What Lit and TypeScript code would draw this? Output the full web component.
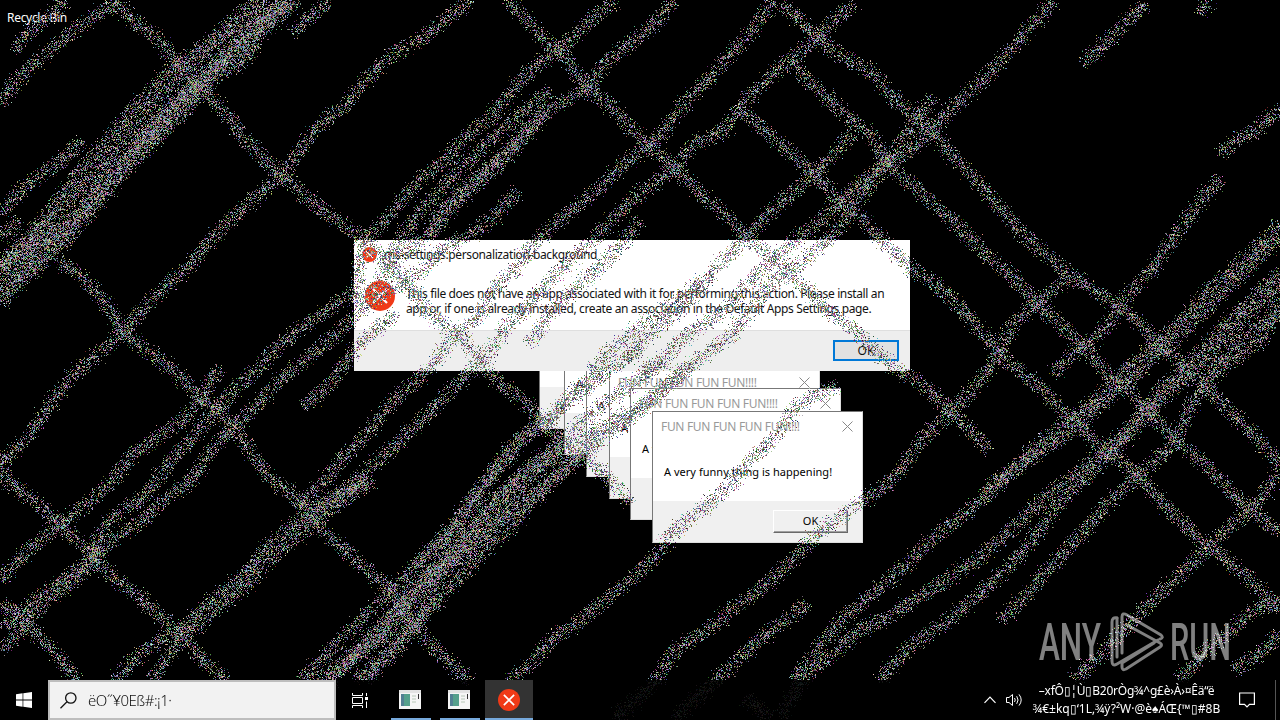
import {LitElement, html, css, svg} from 'lit';
import {customElement, property} from 'lit/decorators.js';
import {map} from 'lit/directives/map.js';

// every scratch is a flat list of x,y pairs
const SCRATCHES : number[][] = [
  // top left
  [66,0, 45,18, 28,32, 14,50],
  [118,0, 80,25, 43,55, 20,76, 0,102],
  [115,0, 133,20, 160,40, 177,63, 197,85, 217,103, 240,132, 267,163, 282,175, 310,200, 333,217, 360,237, 390,265, 407,285, 430,315, 457,332, 480,362, 493,378, 520,398, 537,415, 563,440, 600,470, 630,502],
  [256,0, 225,28, 194,52, 168,72, 135,105, 108,138, 80,170, 55,203, 25,240, 0,262],
  [268,0, 235,28, 205,52, 178,78, 145,110, 118,142, 90,175, 64,205, 32,240, 0,272],
  [280,5, 240,38, 200,80, 165,110, 140,138, 105,170, 85,203, 55,235, 30,258, 0,280],
  [290,0, 255,32, 240,50, 205,80, 180,105, 148,140, 115,172, 90,203, 60,235, 35,262, 0,290],
  [298,0, 262,30, 243,62, 215,75, 190,104, 155,140, 125,168, 100,200, 70,235, 50,255, 20,282, 0,302],
  [285,0, 248,30, 222,58, 190,88, 160,118, 130,150],
  [60,225, 35,245, 15,255, 0,268],
  [328,0, 310,16, 292,32],
  [82,140, 65,157, 35,178, 15,195, 0,212],
  [20,220, 0,238],
  [472,0, 447,17, 427,35, 393,53, 367,77, 347,103, 320,123, 300,150, 282,173, 260,193, 233,217, 210,240, 187,267, 160,290, 140,312, 123,332, 100,352, 73,373, 50,403, 27,437, 0,463],
  [57,260, 77,273, 97,293, 113,313, 123,332, 147,350, 173,370, 197,393, 217,410, 233,427, 250,450, 270,480, 293,493, 300,507, 313,520, 333,540, 360,563, 388,588, 427,640, 450,663, 470,680],
  // top middle
  [507,0, 527,20, 543,40, 560,50, 573,70, 587,87, 607,103, 627,123, 647,143, 673,167, 700,193, 727,217, 747,238, 773,258, 790,275, 813,295, 830,312, 857,332, 877,352, 896,368, 920,383, 940,400, 956,417, 973,433, 988,450],
  [614,0, 587,23, 560,48, 537,63, 517,83, 497,110, 470,133, 447,157, 427,173, 403,197, 383,223, 363,240, 356,290, 327,310, 300,327, 273,350, 260,367, 240,383, 213,413, 190,440, 170,460, 143,497, 117,513, 97,535, 93,557, 67,577, 43,593, 20,613, 0,627],
  [674,0, 654,23, 634,40, 607,60, 587,87, 564,100, 540,113, 524,137, 500,163, 477,183, 454,203, 434,230, 412,246, 390,265, 372,290, 353,302],
  [550,90, 527,107, 504,127, 480,150, 447,180, 427,203, 405,230, 390,258],
  [547,112, 520,135, 495,160, 470,182, 442,208, 428,236],
  [517,190, 500,210, 477,230, 443,248, 420,272, 385,290, 353,317, 333,337, 307,357, 283,377, 260,400, 233,427, 213,447, 190,480, 163,500, 133,527, 110,540, 93,560, 70,583, 45,600, 25,625, 0,650],
  [397,313, 373,330, 353,350, 333,380, 303,407],
  [220,367, 203,393, 183,420, 157,437, 133,453, 110,483, 90,500, 60,523, 30,547, 0,580],
  [774,0, 754,27, 727,57, 707,80, 684,103, 664,130, 647,147, 624,163, 604,183, 584,200, 560,220, 532,243, 517,268, 493,288, 480,315, 457,332, 425,372, 390,403, 367,433, 340,460, 320,483, 300,505],
  [854,3, 837,17, 817,37, 790,57, 780,67, 754,90, 737,110, 724,130, 694,143, 674,167, 644,190, 617,213, 594,238, 557,272, 537,295, 510,322, 483,358, 455,385, 427,413, 397,443, 370,467, 345,490, 310,512],
  [640,220, 620,245, 593,272, 570,292, 547,315, 530,345],
  [780,3, 797,17, 817,37, 837,53, 854,62, 873,73, 896,100, 916,117, 933,133, 953,157, 976,180, 996,203, 1026,237, 1050,258, 1070,273, 1093,290, 1120,307, 1143,327, 1163,347, 1186,367, 1206,387, 1236,417, 1266,447, 1280,465],
  [790,60, 810,83, 834,103, 853,122, 870,133, 880,150, 890,167, 910,183, 933,203, 970,238, 993,260, 1013,277, 1036,303, 1060,323, 1083,347, 1106,373, 1126,387, 1150,413, 1173,437, 1196,457, 1220,480, 1250,510, 1280,532],
  [740,110, 764,130, 787,150, 814,173, 834,197, 853,210, 880,238, 910,267, 940,287, 963,310, 996,350, 1010,363, 1040,387, 1070,417, 1093,440, 1116,457, 1140,477, 1165,505, 1200,540, 1240,570, 1280,610],
  [1053,0, 1030,27, 1010,50, 986,77, 956,103, 933,127, 910,150, 886,163, 853,187, 824,217, 797,238, 773,258, 743,288, 727,308, 690,332, 663,358, 640,375],
  [853,133, 814,173, 780,203, 747,235, 720,262, 700,288, 673,315, 647,335, 625,360],
  [933,97, 913,123, 893,150, 873,180, 853,207, 830,238, 797,265, 767,285, 753,308, 727,338, 690,365, 660,390, 620,425],
  [700,280, 670,305, 640,325, 610,350, 590,372],
  // top right
  [1146,3, 1120,27, 1100,47, 1083,63],
  [1207,0, 1200,13],
  [1280,107, 1256,130, 1236,140, 1220,155],
  [1220,177, 1206,193, 1186,220, 1168,243, 1153,267, 1130,290, 1116,313, 1096,337, 1073,353, 1053,373],
  [1280,223, 1258,245, 1236,267, 1206,292, 1186,315, 1160,340, 1130,365, 1106,388, 1076,415, 1043,440, 1013,468, 985,492],
  [1280,236, 1240,275, 1210,303, 1188,328, 1160,350, 1135,375, 1108,397, 1076,427, 1043,450, 1005,476, 975,505, 935,535, 905,565, 870,595, 840,620, 814,653, 794,680],
  [1280,270, 1253,298, 1223,325, 1193,360, 1160,388, 1143,412, 1113,443, 1080,470, 1040,500, 1010,530, 975,560, 930,590, 890,615, 854,633, 830,657, 800,680],
  [1280,284, 1253,310, 1223,338, 1193,372, 1160,398, 1140,423, 1113,450, 1085,478, 1055,505, 1025,550, 973,600, 940,625, 905,650, 880,680],
  [1280,300, 1260,340, 1220,367, 1206,383, 1190,407, 1176,437, 1163,453, 1140,473, 1110,500, 1085,530, 1055,560, 1023,598, 1000,620],
  [1280,312, 1258,325, 1235,345, 1208,372],
  [1070,277, 1036,303, 1013,323, 1000,350, 980,380, 956,407, 930,430, 910,453, 896,477, 875,492, 853,507, 820,530, 794,557, 767,583, 734,607, 707,630, 674,650, 657,680, 615,718],
  // middle band running down to the task bar
  [640,345, 610,370, 580,385, 545,425, 510,445, 480,490, 455,530, 427,555, 395,585, 360,620, 325,655, 300,680],
  [665,360, 630,385, 600,405, 560,440, 520,475, 490,505, 460,545, 430,575, 400,605, 365,640, 330,680],
  [690,365, 650,400, 605,435, 570,465, 545,485, 505,515, 475,540, 440,570, 415,600, 390,630, 350,660, 315,680],
  [625,410, 585,445, 555,475, 520,515, 490,545, 465,570, 435,602, 410,625, 385,655, 355,680],
  [600,375, 575,395, 550,415, 525,432, 505,460, 485,482, 460,515, 440,540, 415,565],
  [560,445, 530,478, 495,520, 470,550, 440,570, 425,610, 400,645, 365,680],
  [600,425, 565,450, 535,465, 500,495, 470,530, 445,555, 410,590, 375,640, 340,665],
  // bottom left
  [0,463, 7,480, 33,500, 60,523, 77,540, 97,557, 110,577, 133,590, 153,610, 180,633, 200,657, 227,680],
  [0,603, 17,613, 27,627, 50,647, 77,680],
  [180,630, 147,647, 113,680],
  [180,640, 150,680],
  [365,480, 328,500, 305,517, 285,530, 263,550, 240,578, 210,600, 180,630],
  [373,480, 338,503, 315,520, 295,537, 270,558, 248,583, 218,607, 186,634],
  // bottom middle and right
  [837,385, 813,395, 793,408, 780,432, 750,458, 727,488, 704,507, 674,530, 657,553, 630,580, 607,597, 580,620, 550,640, 527,667, 507,680],
  [807,603, 780,623, 754,643, 730,667, 674,718],
  [745,697, 770,717],
  [800,680, 780,715],
  [1280,470, 1255,505, 1225,530, 1195,560, 1153,600, 1130,623, 1107,647, 1073,680],
  [1280,600, 1253,610, 1230,630, 1203,653, 1178,680],
  [1280,633, 1260,653, 1233,670]
];

@customElement('noise-scratches')
class NoiseScratches extends LitElement {
  private seed = 20771;

  // mulberry32, so the pattern is the same on every load
  private random() {
    this.seed = (this.seed + 0x6d2b79f5) | 0;
    let t = Math.imul(this.seed ^ (this.seed >>> 15), 1 | this.seed);
    t = (t + Math.imul(t ^ (t >>> 7), 61 | t)) ^ t;
    return ((t ^ (t >>> 14)) >>> 0) / 4294967296;
  }

  firstUpdated() {
    const canvas = this.renderRoot.querySelector('canvas');
    const ctx = canvas.getContext('2d');
    SCRATCHES.forEach(line => this.drawScratch(ctx, line));
  }

  private drawScratch(ctx : CanvasRenderingContext2D, line : number[]) {
    for (let i = 0; i + 3 < line.length; i += 2) {
      const dx = line[i + 2] - line[i];
      const dy = line[i + 3] - line[i + 1];
      const length = Math.hypot(dx, dy);
      const dots = length * 6;
      for (let n = 0; n < dots; n++) {
        const t = this.random();
        const off = (this.random() + this.random() - 1) * 9;
        const x = line[i] + dx * t - dy / length * off + (this.random() - 0.5) * 5;
        const y = line[i + 1] + dy * t + dx / length * off + (this.random() - 0.5) * 5;
        const base = this.random() * 120;
        const r = Math.floor(base + this.random() * 135);
        const g = Math.floor(base + this.random() * 135);
        const b = Math.floor(base + this.random() * 135);
        ctx.fillStyle = `rgb(${r},${g},${b})`;
        ctx.fillRect(Math.round(x), Math.round(y), 1, 1);
      }
    }
  }

  render() {
    return html`<canvas width="1280" height="720"></canvas>`;
  }

  static styles = css`
    :host, canvas {
      display: block;
    }
  `;
}

const errorIcon = (size : number) => svg`
  <svg width=${size} height=${size} viewBox="0 0 30 30">
    <circle cx="15" cy="15" r="15" fill="#f03a17"/>
    <path d="M8 8 L22 22 M22 8 L8 22" stroke="#fff" stroke-width="2.3"/>
  </svg>`;

@customElement('fun-window')
class FunWindow extends LitElement {
  render() {
    return html`
      <div class="title">
        <span>FUN FUN FUN FUN FUN!!!!</span>
        <svg width="11" height="11" viewBox="0 0 11 11">
          <path d="M.5 .5 L10.5 10.5 M10.5 .5 L.5 10.5" stroke="#888" fill="none"/>
        </svg>
      </div>
      <div class="message">A very funny thing is happening!</div>
      <div class="footer"><div class="button">OK</div></div>
    `;
  }

  static styles = css`
    :host {
      display: flex;
      flex-direction: column;
      box-sizing: border-box;
      width: 211px;
      height: 132px;
      border: 1px solid #777;
      border-right-color: #ddd;
      border-bottom-color: #ddd;
      background: #fff;
      font-family: "Noto Sans", sans-serif;
    }

    .title {
      display: flex;
      align-items: center;
      justify-content: space-between;
      height: 29px;
      padding: 0 9px 0 8px;
      color: #999;
      font-size: 12px;
      letter-spacing: -0.32px;
    }

    .message {
      flex: 1;
      padding: 23px 0 0 11px;
      color: #000;
      font-size: 11px;
      line-height: 16px;
      letter-spacing: 0.03px;
      white-space: nowrap;
    }

    .footer {
      display: flex;
      justify-content: flex-end;
      box-sizing: border-box;
      height: 41px;
      padding: 9px 14px 0 0;
      background: #f0f0f0;
    }

    .button {
      box-sizing: border-box;
      width: 75px;
      height: 23px;
      border: 1px solid;
      border-color: #fff #696969 #696969 #fff;
      box-shadow: inset -1px -1px #a0a0a0;
      color: #000;
      font-size: 11px;
      line-height: 20px;
      text-align: center;
    }
  `;
}

@customElement('error-dialog')
class ErrorDialog extends LitElement {
  render() {
    return html`
      <div class="title">
        ${errorIcon(15)}
        <span>ms-settings:personalization-background</span>
      </div>
      <div class="content">
        ${errorIcon(30)}
        <div class="text">
          <div class="first">This file does not have an app associated with it for performing this action. Please install an</div>
          <div class="second">app or, if one is already installed, create an association in the Default Apps Settings page.</div>
        </div>
      </div>
      <div class="footer"><div class="button">OK</div></div>
    `;
  }

  static styles = css`
    :host {
      display: flex;
      flex-direction: column;
      width: 556px;
      height: 131px;
      background: #fff;
      color: #111;
      font: 12px "Noto Sans", sans-serif;
      white-space: nowrap;
    }

    .title {
      display: flex;
      align-items: center;
      gap: 7px;
      height: 29px;
      padding-left: 8px;
      letter-spacing: -0.38px;
    }

    .content {
      display: flex;
      flex: 1;
      gap: 11px;
      padding: 12px 0 0 11px;
    }

    .text {
      padding-top: 5px;
      line-height: 15px;
      letter-spacing: -0.37px;
    }

    .footer {
      display: flex;
      justify-content: flex-end;
      box-sizing: border-box;
      height: 41px;
      padding: 9px 11px 0 0;
      border-top: 1px solid #dfdfdf;
      background: #eee;
    }

    .button {
      box-sizing: border-box;
      width: 66px;
      height: 21px;
      border: 2px solid #0078d7;
      background: #e1e1e1;
      line-height: 17px;
      text-align: center;
    }
  `;
}

const appIcon = svg`
  <svg width="22" height="19" viewBox="0 0 22 19">
    <rect width="22" height="19" fill="#f5f5f5"/>
    <rect width="22" height="3" fill="#e2e2e2"/>
    <rect x="2" y="4" width="9" height="12" fill="#55a08c"/>
    <rect x="2" y="4" width="3" height="12" fill="#527f93"/>
    <path d="M13 6 H17 M13 9 H17 M13 12 H17" stroke="#b8c8b8"/>
    <path d="M19.5 4 V9" stroke="#333"/>
  </svg>`;

@customElement('task-bar')
class TaskBar extends LitElement {
  render() {
    return html`
      <div class="start">
        <svg width="16" height="16" viewBox="0 0 16 16" fill="#fff">
          <path d="M0 2.2 L6.6 1.3 V7.6 H0 Z M7.3 1.2 L16 0 V7.6 H7.3 Z M0 8.4 H6.6 V14.7 L0 13.8 Z M7.3 8.4 H16 V16 L7.3 14.8 Z"/>
        </svg>
      </div>
      <div class="search">
        <svg width="17" height="17" viewBox="0 0 17 17" fill="none" stroke="#111" stroke-width="1.3">
          <circle cx="10.8" cy="6" r="5.2"/>
          <path d="M7 9.8 L.5 16.3"/>
        </svg>
        <span>ëO˝¥0Eß#:¡1·</span>
      </div>
      <div class="view">
        <svg width="17" height="17" viewBox="0 0 17 17" fill="none" stroke="#fff">
          <path d="M.5 1 V3.5 H10.5 V1 M.5 16 V13.5 H10.5 V16 M.5 5.5 H10.5 V11.5 H.5 Z M14.5 1 V4 M14.5 9.5 V16"/>
          <rect x="13" y="5" width="3" height="3" fill="#fff" stroke="none"/>
        </svg>
      </div>
      <div class="apps">
        <div class="app">${appIcon}</div>
        <div class="app">${appIcon}</div>
        <div class="app active">${errorIcon(22)}</div>
      </div>
      <div class="tray">
        <svg width="12" height="8" viewBox="0 0 12 8" fill="none" stroke="#fff" stroke-width="1.2">
          <path d="M.5 6.8 L6 1.2 L11.5 6.8"/>
        </svg>
        <svg class="volume" width="17" height="14" viewBox="0 0 17 14" fill="none" stroke="#fff">
          <path d="M.5 4.5 H3 L6.5 1.5 V12.5 L3 9.5 H.5 Z"/>
          <path d="M8.5 5 Q10 7 8.5 9 M10.7 3.2 Q13.4 7 10.7 10.8 M13 1.4 Q17.4 7 13 12.6"/>
        </svg>
        <div class="clock">
          <div class="time">–xfÔ▯¦Ù▯B20rÒg¾^g£è›À›¤Êä“ë</div>
          <div class="date">¾€±kq▯‘1L‚¾ÿ?²W·@è♠ÁŒ{™▯#8B</div>
        </div>
        <svg class="note" width="16" height="16" viewBox="0 0 16 16" fill="none" stroke="#fff" stroke-width="1.2">
          <path d="M.6 1 H15.4 V12.4 H10.5 L8 15 L5.5 12.4 H.6 Z"/>
        </svg>
        <div class="edge"></div>
      </div>
    `;
  }

  static styles = css`
    :host {
      display: flex;
      height: 40px;
      background: rgba(0, 0, 0, 0.87);
      color: #fff;
      font-family: "Noto Sans", sans-serif;
      white-space: nowrap;
    }

    .start, .view {
      display: flex;
      align-items: center;
      justify-content: center;
      width: 48px;
    }

    .search {
      display: flex;
      align-items: center;
      gap: 11px;
      box-sizing: border-box;
      width: 288px;
      padding-left: 10px;
      border: 2px solid #bdbdbd;
      background: #f2f2f2;
      color: #111;
      font-size: 15px;
      font-weight: 300;
    }

    .search span {
      letter-spacing: -0.5px;
    }

    .apps {
      display: flex;
      flex: 1;
      padding-left: 2px;
    }

    .app {
      display: flex;
      align-items: center;
      justify-content: center;
      box-sizing: border-box;
      width: 40px;
      margin: 0 4px 0 5px;
      padding-right: 2px;
      border-bottom: 2px solid #76a9dc;
    }

    .active {
      width: 48px;
      margin: 0;
      padding: 2px 1px 0 0;
      background: #333;
    }

    .app:nth-child(2) {
      margin-right: 5px;
    }

    .tray {
      display: flex;
      align-items: center;
      width: 296px;
    }

    .volume {
      margin-left: 10px;
    }

    .clock {
      width: 189px;
      margin-left: 9px;
      font-size: 12px;
      line-height: 18px;
      text-align: center;
    }

    .time, .date {
      display: flex;
      justify-content: center;
    }

    .time {
      letter-spacing: -0.22px;
    }

    .note {
      margin-left: 18px;
    }

    .edge {
      width: 1px;
      height: 40px;
      margin-left: 20px;
      background: #555;
    }
  `;
}

@customElement('app-root')
class AppRoot extends LitElement {
  @property() _windows = [
    {x: 539, y: 297},
    {x: 564, y: 323},
    {x: 586, y: 345},
    {x: 609, y: 367},
    {x: 630, y: 388},
    {x: 652, y: 411}
  ];

  render() {
    return html`
      <div class="desktop">
        <div class="shortcut">Recycle Bin</div>
        ${map(this._windows, (w) => html`
          <fun-window style="left:${w.x}px; top:${w.y}px"></fun-window>
        `)}
        <error-dialog></error-dialog>
      </div>
      <noise-scratches></noise-scratches>
      <svg class="watermark" width="194" height="62" viewBox="0 0 194 62">
        <text x="1" y="49" textLength="62" lengthAdjust="spacingAndGlyphs">ANY</text>
        <text x="132" y="49" textLength="61" lengthAdjust="spacingAndGlyphs">RUN</text>
        <g fill="none" stroke="#fff" stroke-width="3" stroke-linejoin="round" stroke-linecap="round">
          <path d="M79 7 Q74 6 74 11 V50 Q74 56 79 53 L120 29"/>
          <path d="M84 42 V6 Q84 1 89 4 L123 24 Q126 27 122 28"/>
          <path d="M79 7 V46 M89 14 L122 32 Q125 34 122 36 L88 58 Q84 60 84 56 V52 L116 32"/>
        </g>
      </svg>
      <task-bar></task-bar>
    `;
  }

  static styles = css`
    :host {
      display: flex;
      flex-direction: column;
      position: relative;
      width: 1280px;
      height: 720px;
      overflow: hidden;
      background: #000;
      font-family: "Noto Sans", sans-serif;
    }

    .desktop {
      flex: 1;
    }

    .shortcut {
      padding: 9px 0 0 7px;
      color: #fff;
      font-size: 12px;
      line-height: 17px;
      letter-spacing: -0.3px;
    }

    fun-window {
      position: absolute;
    }

    error-dialog {
      position: absolute;
      left: 354px;
      top: 240px;
    }

    noise-scratches {
      position: absolute;
      left: 0;
      top: 0;
    }

    .watermark {
      position: absolute;
      left: 1038px;
      top: 611px;
      opacity: 0.5;
    }

    .watermark text {
      fill: #fff;
      font: 500 51px Roboto, sans-serif;
    }

    task-bar {
      position: relative;
    }
  `;
}
